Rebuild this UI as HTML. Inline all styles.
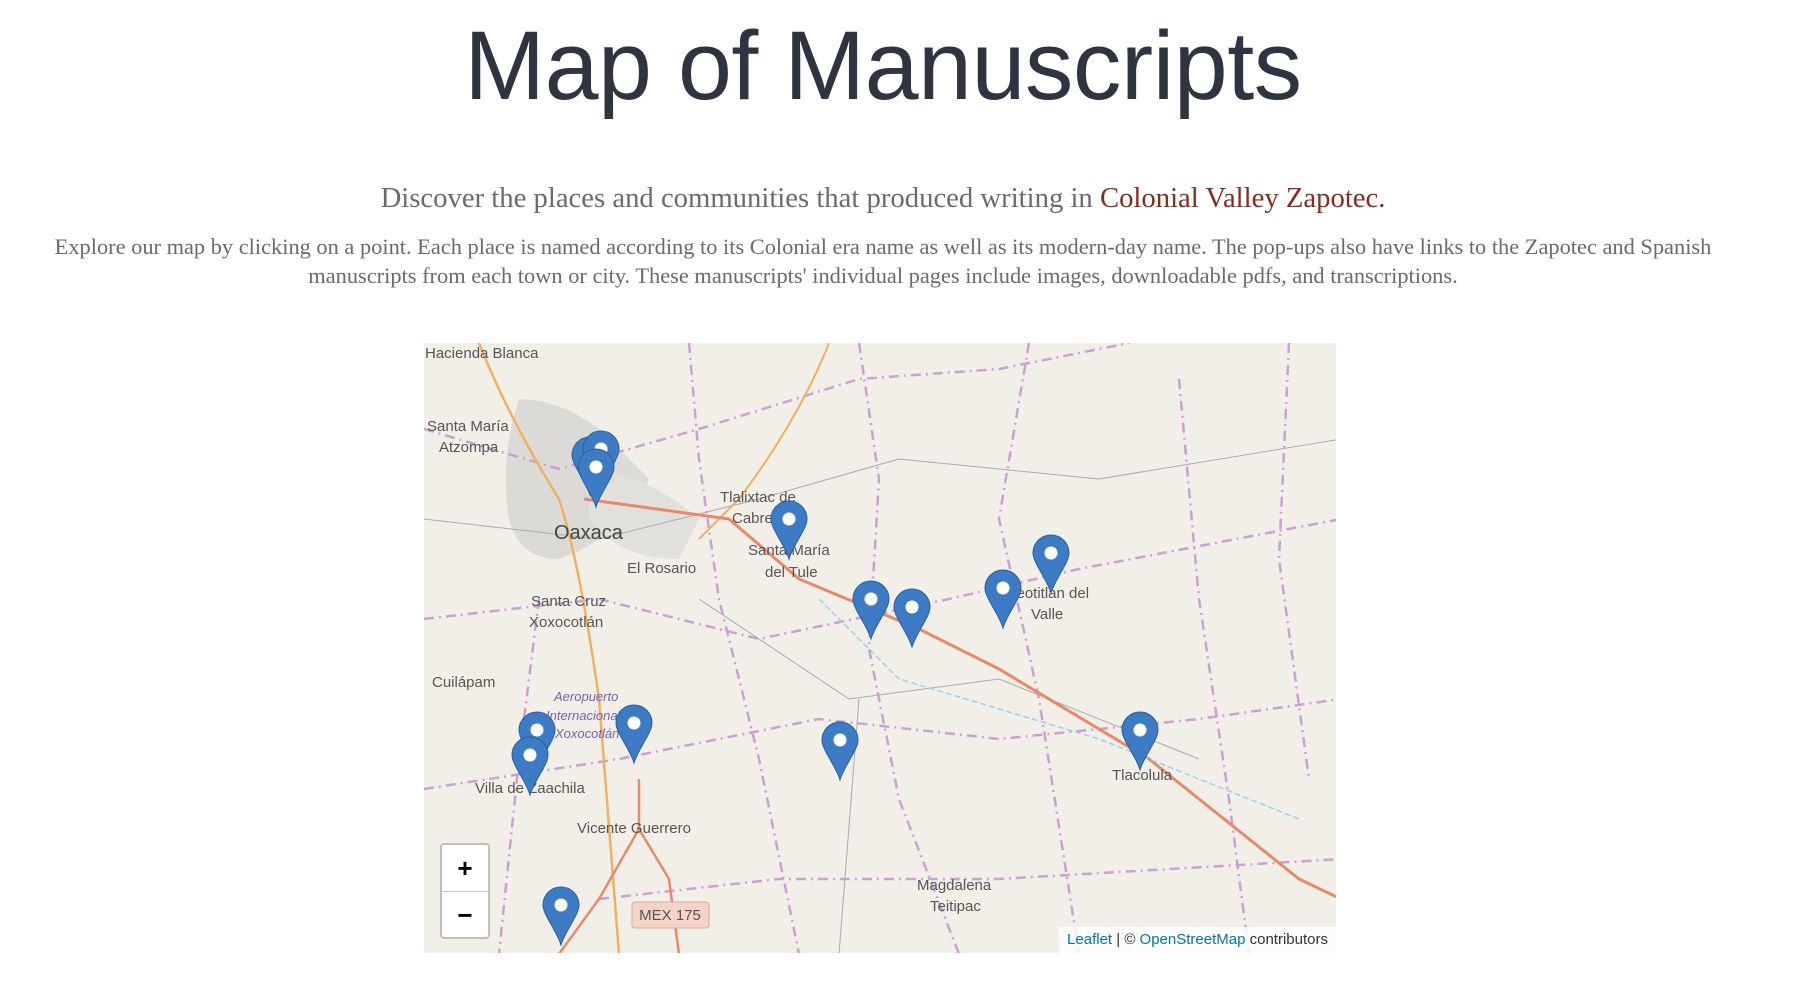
<!DOCTYPE html>
<html><head><meta charset="utf-8"><style>
html,body{margin:0;padding:0;background:#fff;width:1800px;height:1002px;overflow:hidden}
.t{position:absolute;left:0;width:1766px;text-align:center;white-space:nowrap}
h1{position:absolute;left:0;width:1766px;top:6px;margin:0;text-align:center;font:400 97px/120px "Liberation Sans",sans-serif;color:#2f3440;letter-spacing:-0.5px}
.sub{top:181px;font:28.7px/34px "Liberation Serif",serif;color:#6b6b6b}
.sub span{color:#8b2a1c}
.p{top:232px;font:22.4px/29px "Liberation Serif",serif;color:#6a6a6a}
#map{position:absolute;left:424px;top:343px;width:912px;height:610px;background:#f2efe9;overflow:hidden}
.lbl{font-family:"Liberation Sans",sans-serif;font-size:15px;fill:#555}
</style></head><body>
<h1>Map of Manuscripts</h1>
<div class="t sub">Discover the places and communities that produced writing in <span>Colonial Valley Zapotec.</span></div>
<div class="t p">Explore our map by clicking on a point. Each place is named according to its Colonial era name as well as its modern-day name. The pop-ups also have links to the Zapotec and Spanish<br>manuscripts from each town or city. These manuscripts' individual pages include images, downloadable pdfs, and transcriptions.</div>
<div id="map">
<svg width="917" height="610" viewBox="425 344 917 610" xmlns="http://www.w3.org/2000/svg">
<defs>
<g id="mk"><path d="M0 0 C-4 -14 -18 -30 -18 -40 A18 18 0 1 1 18 -40 C18 -30 4 -14 0 0Z" fill="#3d7cc4" stroke="#2a5f9e" stroke-width="1"/><circle cx="0" cy="-40" r="6.5" fill="#fff"/></g>
</defs>
<path d="M520 400 Q560 400 600 430 L650 480 Q620 540 560 560 Q520 560 510 520 Q500 460 520 400Z" fill="#dcdad6"/>
<path d="M590 470 Q640 470 700 520 L680 560 Q620 560 590 520Z" fill="#e2e0dc"/>
<g fill="none" stroke="#c8a2d2" stroke-width="2.5" stroke-dasharray="10 5 2 5">
<path d="M425 430 L560 470 L700 430 L860 380 L1000 370 L1130 344"/>
<path d="M425 620 L600 600 L760 640 L950 600 L1080 570 L1342 520"/>
<path d="M425 790 L620 760 L820 720 L1000 740 L1200 720 L1342 700"/>
<path d="M690 344 L700 460 L720 600 L760 760 L800 955"/>
<path d="M860 344 L880 480 L870 650 L900 800 L960 955"/>
<path d="M1030 344 L1000 520 L1040 700 L1080 955"/>
<path d="M1180 380 L1200 600 L1230 800 L1250 955"/>
<path d="M540 600 L520 760 L500 955"/>
<path d="M600 900 L780 880 L1000 880 L1342 860"/>
<path d="M1290 344 L1280 560 L1310 780"/>
</g>
<g fill="none" stroke="#aaa" stroke-width="1">
<path d="M425 520 L600 540 L760 500 L900 460 L1100 480 L1342 440"/>
<path d="M700 600 L850 700 L1000 680 L1200 760"/>
<path d="M860 700 L840 955"/>
</g>
<path d="M480 344 Q510 420 560 500 Q580 560 600 700 L620 955" fill="none" stroke="#f0b060" stroke-width="2.5"/>
<path d="M830 344 Q800 420 740 500 L700 540" fill="none" stroke="#f0b060" stroke-width="2"/>
<path d="M585 500 L730 520 L800 580 L920 630 L1000 670 L1150 760 L1300 880 L1342 900" fill="none" stroke="#e88a6a" stroke-width="3"/>
<path d="M640 780 L640 830 L600 900 L560 955 M640 830 L670 880 L680 955" fill="none" stroke="#e88a6a" stroke-width="2.5"/>
<path d="M820 600 Q860 640 900 680 L1100 740 L1300 820" fill="none" stroke="#9ad0e8" stroke-width="1.5" stroke-dasharray="6 3"/>
<rect x="633" y="903" width="77" height="26" rx="3" fill="#f4d4c8" stroke="#d8a898"/>
<text x="671" y="921" text-anchor="middle" class="lbl" font-size="14">MEX 175</text>
<g class="lbl">
<text x="426" y="359">Hacienda Blanca</text>
<text x="428" y="432">Santa María</text><text x="440" y="453">Atzompa</text>
<text x="555" y="540" font-size="20" fill="#444">Oaxaca</text>
<text x="628" y="574">El Rosario</text>
<text x="721" y="503">Tlalixtac de</text><text x="733" y="524">Cabrera</text>
<text x="749" y="556">Santa María</text><text x="766" y="578">del Tule</text>
<text x="532" y="607">Santa Cruz</text><text x="530" y="628">Xoxocotlán</text>
<text x="433" y="688">Cuilápam</text>
<text x="555" y="702" font-size="13" fill="#7a5fb0" font-style="italic">Aeropuerto</text>
<text x="547" y="721" font-size="13" fill="#7a5fb0" font-style="italic">Internacional</text>
<text x="556" y="739" font-size="13" fill="#7a5fb0" font-style="italic">Xoxocotlán</text>
<text x="476" y="794">Villa de Zaachila</text>
<text x="578" y="834">Vicente Guerrero</text>
<text x="1010" y="599">Teotitlán del</text><text x="1032" y="620">Valle</text>
<text x="1113" y="781">Tlacolula</text>
<text x="918" y="891">Magdalena</text><text x="931" y="912">Teitipac</text>
</g>
<use href="#mk" x="591" y="496"/><use href="#mk" x="602" y="490"/><use href="#mk" x="597" y="508"/>
<use href="#mk" x="790" y="560"/><use href="#mk" x="872" y="640"/><use href="#mk" x="913" y="648"/>
<use href="#mk" x="1004" y="629"/><use href="#mk" x="1052" y="594"/><use href="#mk" x="1141" y="771"/>
<use href="#mk" x="841" y="781"/><use href="#mk" x="635" y="764"/><use href="#mk" x="538" y="771"/>
<use href="#mk" x="531" y="796"/><use href="#mk" x="562" y="946"/>
</svg>
<div style="position:absolute;left:16px;top:500px;width:46px;height:92px;border:2px solid rgba(0,0,0,.2);border-radius:4px;background:#fff;background-clip:padding-box;font:bold 26px/46px 'Liberation Sans',sans-serif;text-align:center;color:#000">
<div style="height:46px;border-bottom:1px solid #ccc">+</div><div style="height:45px">&minus;</div></div>
<div style="position:absolute;right:0;bottom:0;background:rgba(255,255,255,.8);padding:2px 8px;font:15px/22px 'Liberation Sans',sans-serif;color:#333"><span style="color:#0078a8">Leaflet</span> | © <span style="color:#0078a8">OpenStreetMap</span> contributors</div>
</div>
</body></html>
